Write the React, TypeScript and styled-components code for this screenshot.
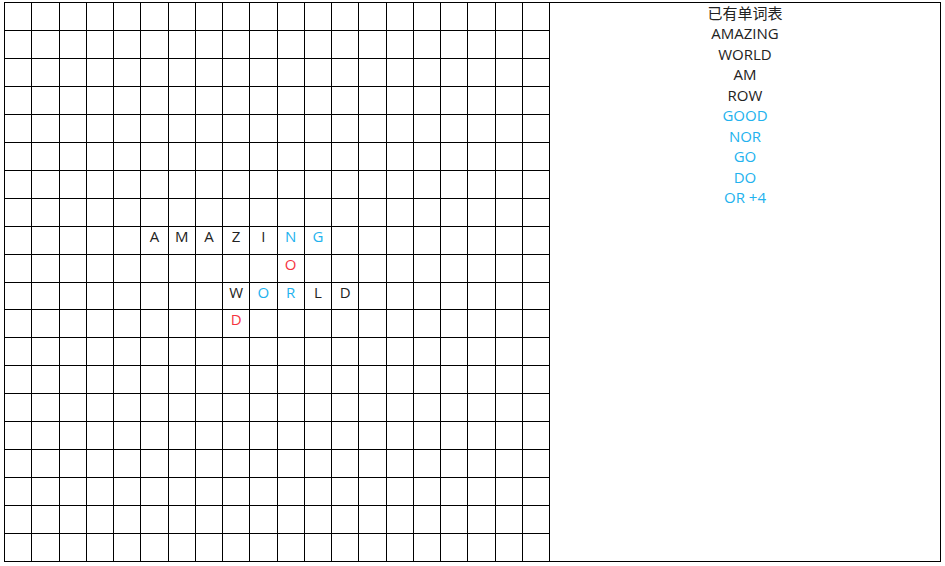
import styled, { createGlobalStyle } from 'styled-components'

const GlobalStyle = createGlobalStyle`
  html, body {
    margin: 0;
    padding: 0;
    background: #fff;
  }
  body {
    font-family: 'Open Sans', 'Noto Sans CJK SC', sans-serif;
    color: #222;
  }
`

const Page = styled.div`
  display: flex;
  width: 937px;
  height: 560px;
  margin: 2px 0 0 4px;
`

const Board = styled.div`
  display: grid;
  grid-template-columns: repeat(20, 1fr);
  grid-template-rows: repeat(20, 1fr);
  width: 546px;
  height: 560px;
  border-top: 1px solid #000;
  border-left: 1px solid #000;
  box-sizing: border-box;
`

const Cell = styled.div<{ $tone?: string }>`
  display: flex;
  align-items: flex-start;
  justify-content: center;
  border-right: 1px solid #000;
  border-bottom: 1px solid #000;
  font-size: 15px;
  line-height: 19px;
  color: ${(p) => p.$tone || '#222'};
`

const WordPanel = styled.div`
  flex: 1;
  display: flex;
  flex-direction: column;
  align-items: center;
  border: 1px solid #000;
  border-left: none;
  box-sizing: border-box;
  font-size: 15px;
  line-height: 20.44px;
`

const Word = styled.div<{ $fresh?: boolean }>`
  color: ${(p) => (p.$fresh ? '#22b2ee' : '#222')};
`

const BLUE = '#22b2ee'
const RED = '#f5333f'

type Letter = { ch: string; tone?: string }

const placed: Record<string, Letter> = {
  '8,5': { ch: 'A' },
  '8,6': { ch: 'M' },
  '8,7': { ch: 'A' },
  '8,8': { ch: 'Z' },
  '8,9': { ch: 'I' },
  '8,10': { ch: 'N', tone: BLUE },
  '8,11': { ch: 'G', tone: BLUE },
  '9,10': { ch: 'O', tone: RED },
  '10,8': { ch: 'W' },
  '10,9': { ch: 'O', tone: BLUE },
  '10,10': { ch: 'R', tone: BLUE },
  '10,11': { ch: 'L' },
  '10,12': { ch: 'D' },
  '11,8': { ch: 'D', tone: RED },
}

const words = [
  { text: 'AMAZING' },
  { text: 'WORLD' },
  { text: 'AM' },
  { text: 'ROW' },
  { text: 'GOOD', fresh: true },
  { text: 'NOR', fresh: true },
  { text: 'GO', fresh: true },
  { text: 'DO', fresh: true },
  { text: 'OR +4', fresh: true },
]

export default function App() {
  const cells = []
  for (let r = 0; r < 20; r++) {
    for (let c = 0; c < 20; c++) {
      const l = placed[`${r},${c}`]
      cells.push(
        <Cell key={`${r}-${c}`} $tone={l?.tone}>
          {l?.ch}
        </Cell>
      )
    }
  }

  return (
    <>
      <GlobalStyle />
      <Page>
        <Board>{cells}</Board>
        <WordPanel>
          <Word>已有单词表</Word>
          {words.map((w) => (
            <Word key={w.text} $fresh={w.fresh}>
              {w.text}
            </Word>
          ))}
        </WordPanel>
      </Page>
    </>
  )
}
